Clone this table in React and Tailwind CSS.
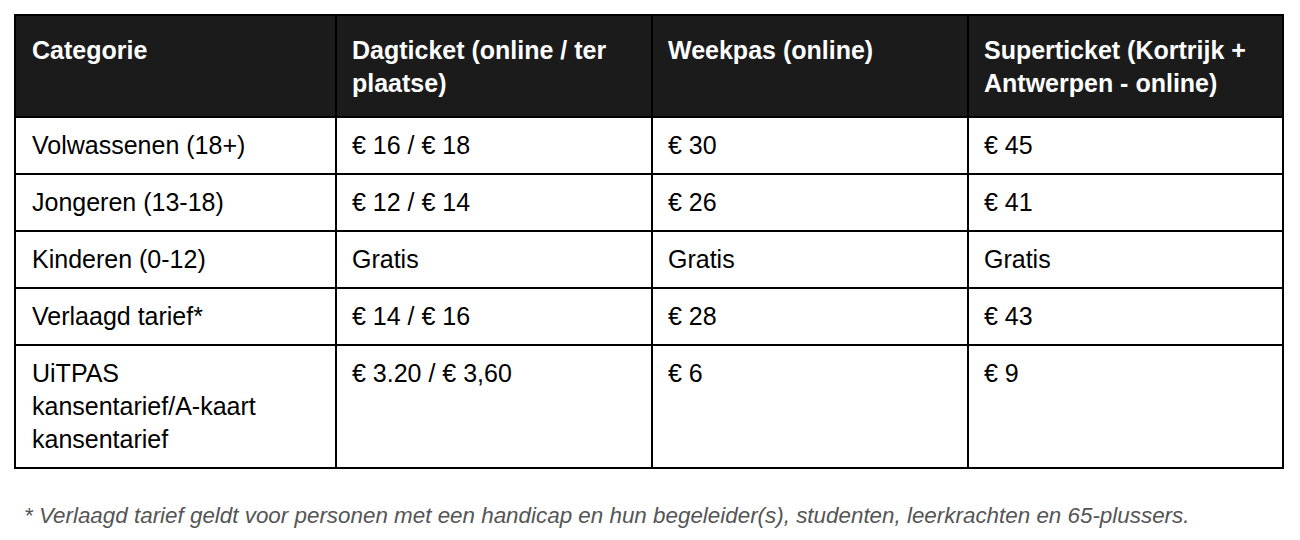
export default function App() {
  const rows = [
    ["Volwassenen (18+)", "€ 16 / € 18", "€ 30", "€ 45"],
    ["Jongeren (13-18)", "€ 12 / € 14", "€ 26", "€ 41"],
    ["Kinderen (0-12)", "Gratis", "Gratis", "Gratis"],
    ["Verlaagd tarief*", "€ 14 / € 16", "€ 28", "€ 43"],
    [
      <>
        UiTPAS <span className="whitespace-nowrap">kansentarief/A-kaart</span> kansentarief
      </>,
      "€ 3.20 / € 3,60",
      "€ 6",
      "€ 9",
    ],
  ];

  return (
    <div className="w-[1300px] h-[540px] bg-white font-['Liberation_Sans',Arial,sans-serif] text-black">
      <div className="pt-[14px] pl-[14px]">
        <table className="table-fixed border-collapse w-[1268px] text-[25px] leading-[33px]">
          <thead>
            <tr className="bg-[#1b1b1b] text-white font-bold text-left">
              <th className="w-[321px] border-2 border-black pl-[16px] pr-3 pt-[18px] pb-[16px] align-top font-bold">
                Categorie
              </th>
              <th className="w-[316px] border-2 border-black pl-[15px] pr-3 pt-[18px] pb-[16px] align-top font-bold">
                Dagticket (online / ter plaatse)
              </th>
              <th className="w-[316px] border-2 border-black pl-[15px] pr-3 pt-[18px] pb-[16px] align-top font-bold">
                Weekpas (online)
              </th>
              <th className="w-[315px] border-2 border-black pl-[15px] pr-3 pt-[18px] pb-[16px] align-top font-bold">
                Superticket (Kortrijk + Antwerpen - online)
              </th>
            </tr>
          </thead>
          <tbody>
            {rows.map((r, i) => (
              <tr key={i}>
                {r.map((c, j) => (
                  <td
                    key={j}
                    className={
                      j === 0
                        ? "border-2 border-black pl-[16px] pr-3 pt-[11px] pb-[11px] align-top"
                        : "border-2 border-black pl-[15px] pr-3 pt-[11px] pb-[11px] align-top"
                    }
                  >
                    {c}
                  </td>
                ))}
              </tr>
            ))}
          </tbody>
        </table>
      </div>
      <p className="pl-[24px] mt-[30px] italic text-[22.4px] leading-[33px] text-[#555555]">
        * Verlaagd tarief geldt voor personen met een handicap en hun begeleider(s), studenten, leerkrachten en 65-plussers.
      </p>
    </div>
  );
}
